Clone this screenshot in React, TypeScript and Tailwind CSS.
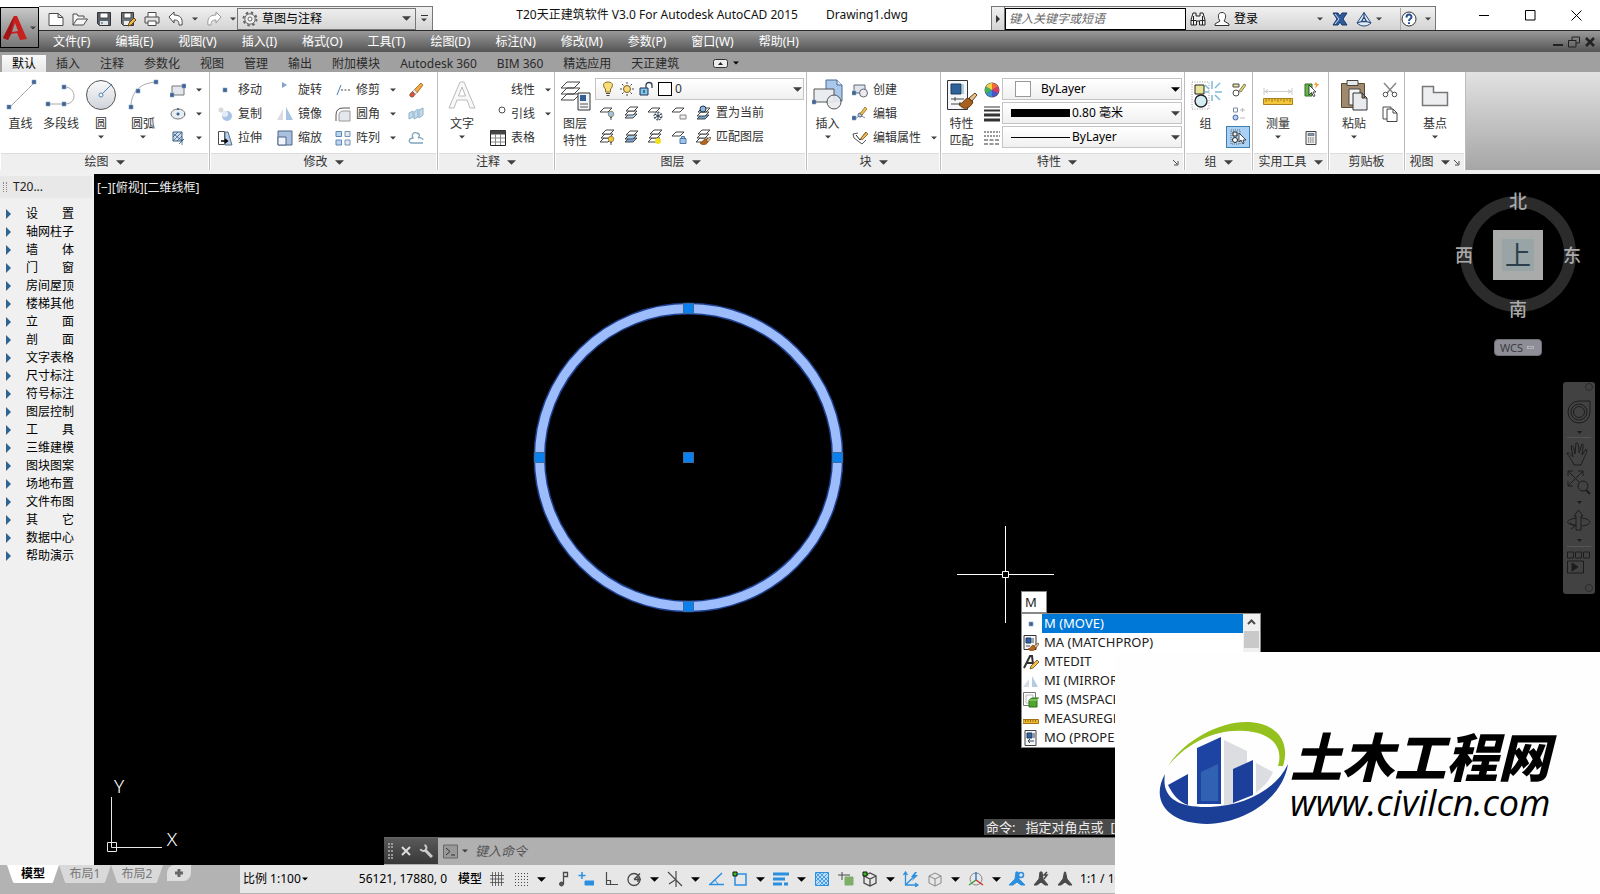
import { useState, type ReactNode } from 'react'
import clsx from 'clsx'

type IconProps = { children: ReactNode; size?: number }

function Icon({ children, size = 16 }: IconProps) {
  return (
    <svg width={size} height={size} viewBox={`0 0 ${size} ${size}`} fill="none" stroke="#4a4a4a" aria-hidden="true" className="shrink-0">
      {children}
    </svg>
  )
}

function Caret({ big = false, dark = false }: { big?: boolean; dark?: boolean }) {
  return (
    <svg width={big ? 9 : 6} height={big ? 5 : 4} viewBox="0 0 8 4" className="shrink-0" aria-hidden="true">
      <path d="M0 0h8L4 4z" fill={dark ? '#000' : '#404040'} />
    </svg>
  )
}

// Shared shapes

const dot = (x: number, y: number) => <rect x={x} y={y} width="4" height="4" fill="#3f628f" stroke="#87a5c9" strokeWidth=".6" />

const layerSheet = (x: number, y: number, fill = '#fff') => (
  <path d={`M${x + 4} ${y}h8l-4 4h-8z`} fill={fill} stroke="#444" />
)

const bulb = (x: number, y: number, fill: string) => (
  <g transform={`translate(${x} ${y})`}>
    <circle cx="3" cy="3" r="2.8" fill={fill} stroke="#7d6a2c" strokeWidth=".7" />
    <path d="M2 6.500h2M2 8h2" stroke="#555" />
  </g>
)

const brush = (x: number, y: number) => (
  <g transform={`translate(${x} ${y})`}>
    <path d="M0 6c2 0 3-3 5-4l3 3c-2 3-5 4-8 1z" fill="#b8651b" stroke="#6b3a10" strokeWidth=".7" />
    <path d="M6 3l4-3 1 1-3 4z" fill="#e8c48a" stroke="#5c4326" strokeWidth=".7" />
  </g>
)

// Quick access toolbar

const QUICK_ICONS: [string, ReactNode][] = [
  ['新建', <path d="M1 2.500h9l5 4v8H1zM10 2.500v4h5" fill="#fff" />],
  ['打开', <path d="M1 14V3h4l1 2h6v2M1 14l4-6h10.500l-4 6z" fill="#f5f5f5" />],
  ['保存', <><path d="M1.500 1.500h13v13h-11l-2-2z" fill="#56616b" stroke="#333" /><path d="M4 2h8v5H4z" fill="#fff" /><path d="M4 10h8v4H4z" fill="#dfe6ea" stroke="none" /><path d="M6 11v2" /></>],
  ['另存为', <><path d="M1.500 1.500h12v13h-10l-2-2z" fill="#6a747c" stroke="#333" /><path d="M4 2h7v5H4z" fill="#fff" /><path d="M4 10h5v4H4z" fill="#eee" stroke="none" /><path d="M8 15l1-3 5-5 2 2-5 5z" fill="#f2b84b" stroke="#6b4a12" /></>],
  ['打印', <><path d="M4 6V1.500h8V6" fill="#fff" /><path d="M1 6h14v6H1z" fill="#e3e3e3" /><path d="M4 10h8v4.500H4z" fill="#fff" /></>],
]

function TitleBar() {
  return (
    <div className="flex h-[31px] items-end border-b border-[#2b2b2b] bg-white">
      <div className="ml-[39px] flex h-6 w-[394px] shrink-0 items-center border-t border-r border-[#777] bg-linear-to-b from-[#f1f1f1] to-[#d3d3d3] pl-[9px]">
        <div className="flex flex-1 items-center gap-2">
          {QUICK_ICONS.map(([name, icon]) => (
            <button key={name} type="button" aria-label={name}><Icon>{icon}</Icon></button>
          ))}
          <button type="button" aria-label="放弃" className="flex items-center gap-2">
            <Icon><path d="M1 6l5-5v3c6 0 9 3 8 10h-3c0-4-1-5-5-5v3z" fill="#fff" /></Icon><Caret />
          </button>
          <button type="button" aria-label="重做" className="flex items-center gap-2">
            <Icon><path d="M15 6l-5-5v3c-6 0-9 3-8 10h3c0-4 1-5 5-5v3z" fill="#fff" stroke="#999" /></Icon><Caret />
          </button>
        </div>
        <label className="flex h-[22px] w-[179px] items-center gap-1 border border-[#777] px-1">
          <Icon>
            <circle cx="8" cy="8" r="6.500" stroke="#666" strokeDasharray="2.500 2.600" strokeWidth="2" />
            <circle cx="8" cy="8" r="5.200" fill="#eee" stroke="#666" />
            <circle cx="8" cy="8" r="2" fill="#fff" stroke="#666" />
          </Icon>
          <select aria-label="工作空间" className="min-w-0 flex-1 appearance-none text-black outline-none">
            <option>草图与注释</option>
          </select>
          <Caret big />
        </label>
        <button type="button" aria-label="自定义" className="flex h-full w-4 flex-col items-center justify-center gap-0.5">
          <span className="h-px w-[7px] bg-[#333]" />
          <Caret />
        </button>
      </div>
      <div className="flex flex-1 justify-center gap-7 self-center whitespace-pre text-[#111]">
        <span>T20天正建筑软件 V3.0 For Autodesk AutoCAD 2015</span>
        <span>Drawing1.dwg</span>
      </div>
      <div className="flex h-6 w-[445px] shrink-0 items-center border-t border-r border-[#777] bg-linear-to-b from-[#f1f1f1] to-[#d3d3d3]">
        <button type="button" aria-label="收拢" className="flex h-full w-[14px] items-center justify-center border-x border-[#777]">
          <svg width="4" height="8" viewBox="0 0 4 8"><path d="M0 0l4 4-4 4z" fill="#333" /></svg>
        </button>
        <input aria-label="搜索" placeholder="键入关键字或短语" className="h-[22px] w-[181px] border border-black bg-white px-[3px] italic outline-none placeholder:text-[#666]" />
        <div className="flex flex-1 items-center pl-1">
          <Icon>
            <path d="M3 2h3v3h4V2h3l2 7v5H9.500v-4h-3v4H1V9zM1 9.500h5.500M9.500 9.500H15M3.500 5v9M12.500 5v9" fill="#eee" stroke="#222" />
          </Icon>
          <button type="button" className="ml-2 flex items-center gap-1 text-black">
            <Icon><path d="M8 1.500c-5 0-4 6-2 8.500L1 13v1.500h14V13l-5-3c2-2.500 3-8.500-2-8.500z" fill="#fff" stroke="#333" /></Icon>
            登录
          </button>
          <span className="ml-auto" />
          <Caret />
          <button type="button" aria-label="Exchange" className="ml-[9px]">
            <Icon><path d="M1 2h5l2 3 2-3h5l-4 6 4 6h-5l-2-3-2 3H1l4-6z" fill="#2c5c9c" stroke="#1b3764" /><path d="M3 3l4 5-4 5" stroke="#c9dcf2" /></Icon>
          </button>
          <button type="button" aria-label="Autodesk 360" className="mx-2 flex items-center gap-1">
            <Icon><path d="M8 1.500L15 12c-4 4-10 4-14 0z" fill="#dfeaf5" stroke="#24487c" /><path d="M8 6l2.500 4.500h-5zM8 1.500V6M15 12l-4.500-1.500M1 12l4.500-1.500" stroke="#24487c" strokeWidth="1.300" fill="#fff" /></Icon>
            <Caret />
          </button>
          <button type="button" aria-label="帮助" className="ml-[10px] flex h-[22px] items-center gap-2 border-l border-[#aaa] pr-1">
            <Icon><circle cx="8" cy="8" r="7" fill="#fff" stroke="#333" /><path d="M5.500 6.500c0-4 5-3.500 5-.6C10.500 8 8 7.500 8 10M8 11.300v1.700" stroke="#23508e" strokeWidth="2" /></Icon>
            <Caret />
          </button>
        </div>
      </div>
      <div className="flex w-[164px] shrink-0 items-center justify-end gap-[35px] self-center pr-[18px]">
        <button type="button" aria-label="最小化"><Icon size={11}><path d="M0 5.500h10" stroke="#000" /></Icon></button>
        <button type="button" aria-label="最大化"><Icon size={11}><path d="M.5.5h9.500v9.500H.5z" stroke="#000" /></Icon></button>
        <button type="button" aria-label="关闭"><Icon size={11}><path d="M.5.5l10 10M10.500.5l-10 10" stroke="#000" /></Icon></button>
      </div>
    </div>
  )
}

const MENUS = ['文件(F)', '编辑(E)', '视图(V)', '插入(I)', '格式(O)', '工具(T)', '绘图(D)', '标注(N)', '修改(M)', '参数(P)', '窗口(W)', '帮助(H)']
const TABS = ['默认', '插入', '注释', '参数化', '视图', '管理', '输出', '附加模块', 'Autodesk 360', 'BIM 360', '精选应用', '天正建筑']

function MenuBar() {
  return (
    <nav className="flex h-[21px] items-center bg-linear-to-b from-[#9a9a9a] to-[#555] pl-[53px] text-white">
      <div className="flex flex-1 gap-[25px]">
        {MENUS.map((m) => <button key={m} type="button">{m}</button>)}
      </div>
      <div className="flex items-center gap-1 pr-1">
        <button type="button" aria-label="最小化图形"><Icon size={12}><path d="M1 9h10" stroke="#222" strokeWidth="2" /></Icon></button>
        <button type="button" aria-label="还原图形"><Icon size={12}><path d="M4 4V1h7.500v6H8M.5 4.500H8V11H.5z" stroke="#222" /></Icon></button>
        <button type="button" aria-label="关闭图形"><Icon size={12}><path d="M2 2l8 8M10 2l-8 8" stroke="#222" strokeWidth="2.500" /></Icon></button>
      </div>
    </nav>
  )
}

function TabBar() {
  const [active, setActive] = useState('默认')
  return (
    <div className="flex h-5 items-end bg-[#a0a0a0] pl-[2px] text-[#2a2a2a]">
      {TABS.map((t) => (
        <button
          key={t}
          type="button"
          onClick={() => setActive(t)}
          className={clsx('h-[17px] px-[10px] leading-[17px]', active === t && 'bg-linear-to-b from-[#fafafa] to-[#e6e6e6] text-black')}>
          {t}
        </button>
      ))}
      <button type="button" aria-label="最小化功能区" className="ml-6 flex h-[18px] items-center gap-1">
        <svg width="16" height="9" viewBox="0 0 16 9"><rect x=".5" y=".5" width="14" height="8" rx="2" fill="#eee" stroke="#333" /><path d="M5 6l2.500-3L10 6z" fill="#222" /></svg>
        <Caret dark />
      </button>
    </div>
  )
}

// Ribbon pieces

function Panel({ title, className, caret = true, launcher = false, children }: { title: string; className: string; caret?: boolean; launcher?: boolean; children: ReactNode }) {
  return (
    <section className={clsx('flex shrink-0 flex-col border-r border-[#bcbcbc] bg-white', className)}>
      <div className="flex h-[81px] pt-[6px]">{children}</div>
      <div className="mx-px flex h-[17px] items-center border-t border-[#dcdcdc] bg-[#efefef]">
        <button type="button" className="flex flex-1 items-center justify-center gap-[7px] whitespace-nowrap">
          {title}
          {caret && <Caret big />}
        </button>
        {launcher && (
          <button type="button" aria-label="设置" className="mr-1"><Icon size={7}><path d="M1 1l4 4M6 2v4H2" /></Icon></button>
        )}
      </div>
    </section>
  )
}

function BigTool({ label, sub, icon, caret = false, className = 'w-10' }: { label: string; sub?: string; icon: ReactNode; caret?: boolean; className?: string }) {
  return (
    <button type="button" className={clsx('flex shrink-0 flex-col items-center whitespace-nowrap', className)}>
      <span className="mt-px mb-1"><Icon size={32}>{icon}</Icon></span>
      <span className="leading-[17px]">{label}</span>
      {sub && <span className="leading-[17px]">{sub}</span>}
      {caret && <span className="mt-[3px]"><Caret /></span>}
    </button>
  )
}

function Tool({ label, icon, caret = false }: { label?: string; icon?: ReactNode; caret?: boolean }) {
  return (
    <button type="button" className="flex h-6 items-center gap-[5px] whitespace-nowrap">
      <Icon>{icon}</Icon>
      {label}
      {caret && <span className="ml-[5px]"><Caret /></span>}
    </button>
  )
}

const Col = ({ children, className }: { children: ReactNode; className?: string }) => (
  <div className={clsx('flex shrink-0 flex-col', className)}>{children}</div>
)

function DrawPanel() {
  return (
    <Panel title="绘图" className="w-[210px]">
      <BigTool label="直线" className="w-[41px]" icon={<><path d="M5 28L29 4" stroke="#aaa" />{dot(2, 26)}{dot(27, 1)}</>} />
      <BigTool label="多段线" icon={<><path d="M4 25h16c13 0 11-17 0-17" stroke="#aaa" />{dot(1, 23)}{dot(17, 23)}{dot(17, 6)}</>} />
      <BigTool label="圆" caret icon={<><defs><linearGradient id="disc" x2="0" y2="1"><stop stopColor="#fafafa" /><stop offset="1" stopColor="#cfd3da" /></linearGradient></defs><circle cx="16" cy="16" r="14.500" fill="url(#disc)" stroke="#555" /><path d="M16 16L27 5" stroke="#4c7fba" /><circle cx="16" cy="16" r="2" fill="#fff" stroke="#4c7fba" /></>} />
      <BigTool label="圆弧" caret className="w-11" icon={<><path d="M4 28C4 12 14 4 29 3" stroke="#aaa" />{dot(2, 26)}{dot(9, 10)}{dot(27, 1)}</>} />
      <Col className="pl-[5px]">
        <Tool caret icon={<><path d="M2 4h12v9H2z" fill="#e4e8ee" stroke="#777" />{dot(0, 11)}{dot(12, 2)}</>} />
        <Tool caret icon={<><ellipse cx="8" cy="8" rx="7" ry="5" fill="#e8edf2" stroke="#777" /><path d="M8 6.500v3M6.500 8h3M8 2v2M14 8h1" stroke="#2f5d8f" strokeWidth="1.500" /></>} />
        <Tool caret icon={<><path d="M3 2h9v9H3z" fill="#cfe0f1" stroke="#36597f" /><path d="M3 7l5-5M3 11l9-9M7 11l5-5M4 4l8 7M9 14l5-5M12 9v6" stroke="#36597f" strokeWidth=".8" /></>} />
      </Col>
    </Panel>
  )
}

function ModifyPanel() {
  return (
    <Panel title="修改" className="w-[228px]">
      <Col className="w-[60px] pl-[7px]">
        <Tool label="移动" icon={dot(6, 6)} />
        <Tool label="复制" icon={<><circle cx="4" cy="4" r="2.500" fill="#d9d9d9" stroke="none" /><circle cx="10" cy="10" r="5" fill="#a9c4e2" stroke="none" /><circle cx="8" cy="8" r="3" fill="#e2ecf7" stroke="none" /></>} />
        <Tool label="拉伸" icon={<><path d="M1.500 1.500h6v13h-6z" fill="#fff" /><path d="M8 2l3 0 4 13H8z" fill="#b8cfe8" stroke="#58718c" /><path d="M4 11h6M8 9l2.500 2L8 13" stroke="#000" strokeWidth="1.300" /></>} />
      </Col>
      <Col className="w-[58px] pl-[7px]">
        <Tool label="旋转" icon={<path d="M5 0l5 3-5 3z" fill="#7fa3cc" stroke="none" />} />
        <Tool label="镜像" icon={<><path d="M6 3v11H0z" fill="#d9dde2" stroke="none" /><path d="M9 1l7 13H9z" fill="#a6c4e0" stroke="none" /></>} />
        <Tool label="缩放" icon={<><path d="M1 1h14v14H1z" fill="#a9c0df" stroke="#4e6788" /><path d="M1 7h8v8H1z" fill="#f2f5f9" stroke="#4e6788" /></>} />
      </Col>
      <Col className="w-[75px] pl-[7px]">
        <Tool label="修剪" caret icon={<><path d="M2 13L6 3" stroke="#4c7fba" /><path d="M6 8h10" strokeDasharray="2 1.500" /></>} />
        <Tool label="圆角" caret icon={<><path d="M1 15V9q0-7 7-7h7" stroke="#555" /><path d="M4 15V9q0-4 5-4h6v10z" fill="#e4e8ee" stroke="#999" /></>} />
        <Tool label="阵列" caret icon={<><path d="M1 1.500h5.500v5H1z M1 10h5.500v5H1z" fill="#bcd5ef" stroke="#5d87b5" /><path d="M10 1.500h5v5h-5zM10 10h5v5h-5z" fill="#dde8f4" stroke="#7893b3" /></>} />
      </Col>
      <Col className="pl-[5px]">
        <Tool icon={<><path d="M6 8l7-7 2 2-6 8z" fill="#f3a73c" stroke="#8a5a1a" strokeWidth=".7" /><path d="M4.500 9.500L6.500 7.500l2.500 3L7 12.500z" fill="#eee" stroke="#777" strokeWidth=".6" /><path d="M2 12l2.500-2.500L7 12.500 5 15c-2 .5-4-1-3-3z" fill="#d6593a" stroke="#7a3a22" strokeWidth=".7" /></>} />
        <Tool icon={<><path d="M1 7l4-2v6l-4 2zM6 6l4-3v8l-4 2zM11 4l4-2v7l-4 3z" fill="#c5dbea" stroke="#8cb1cd" /></>} />
        <Tool icon={<path d="M15 13H3C0 12 1 8 5 8 3 4 6 2 9 3c4 1 2 4 1 5 3-1 5 1 5 2" stroke="#7da5bd" strokeWidth="1.300" />} />
      </Col>
    </Panel>
  )
}

function AnnotatePanel() {
  return (
    <Panel title="注释" className="w-[117px]">
      <BigTool label="文字" caret className="w-[48px]" icon={<path d="M3 29L14 3h4l11 26h-5l-3-8H11l-3 8zM12.500 17h7L16 8z" fill="#f8f8f8" stroke="#bbb" />} />
      <Col className="pl-1">
        <Tool label="线性" caret />
        <Tool label="引线" caret icon={<circle cx="12" cy="4" r="3" />} />
        <Tool label="表格" icon={<><path d="M.5.5h15v15H.5z" fill="#fff" stroke="#222" /><path d="M1 1h14v3H1z" fill="#444" /><path d="M1 8h14M1 12h14M5.500 4v11M10.500 4v11" stroke="#888" /></>} />
      </Col>
    </Panel>
  )
}

const LAYER_ROWS: ReactNode[][] = [
  [
    <>{layerSheet(1, 3)}{bulb(9, 6, '#9cc5ee')}</>,
    <>{layerSheet(2, 9, '#bdd5ec')}{layerSheet(2, 6)}{layerSheet(3, 2)}</>,
    <>{layerSheet(1, 3)}<circle cx="11" cy="11" r="4" fill="#fff" stroke="#26394d" strokeDasharray="2 1" /><path d="M11 7v8M7.500 9l7 4M14.500 9l-7 4" stroke="#26394d" /></>,
    <>{layerSheet(1, 3)}<path d="M9 10h6v4H9z" fill="#eee" stroke="#888" /></>,
  ],
  [
    <>{layerSheet(1, 9)}{layerSheet(2, 5)}{layerSheet(3, 1)}{bulb(9, 7, '#f5c83c')}</>,
    <>{layerSheet(2, 9, '#7aa5d8')}{layerSheet(2, 6, '#a6c8ea')}{layerSheet(3, 2)}</>,
    <>{layerSheet(1, 9)}{layerSheet(2, 5)}{layerSheet(3, 1)}<circle cx="11" cy="12" r="3" fill="#f4e01c" stroke="none" /></>,
    <>{layerSheet(1, 3)}<path d="M9 9.500h6v5H9zM10.500 9V7.500h3V9" fill="#9cc5ee" stroke="#52789f" /></>,
  ],
]

function Combo({ label, value, before, className, caretDark = true }: { label: string; value: string; before: ReactNode; className?: string; caretDark?: boolean }) {
  return (
    <label className={clsx('flex h-[22px] items-center border border-[#c4c4c4] bg-linear-to-b from-white to-[#f0f0f0] pr-px', className)}>
      {before}
      <select aria-label={label} className="min-w-0 flex-1 appearance-none outline-none">
        <option>{value}</option>
      </select>
      <Caret big dark={caretDark} />
    </label>
  )
}

function LayerPanel() {
  return (
    <Panel title="图层" className="w-[252px]">
      <BigTool label="图层" sub="特性" icon={<><path d="M8 3h13l-6 6H2zM8 9h13l-6 6H2zM8 15h13l-6 6H2z" fill="#fff" stroke="#444" /><path d="M19 14h12v17H19z" fill="#f2f5f8" stroke="#333" /><path d="M21 16h6v6h-6z" fill="#315f94" stroke="none" /><path d="M21 25h8M21 28h8" stroke="#555" /></>} />
      <Col className="flex-1 gap-px pr-[2px]">
        <Combo
          label="图层"
          value="0"
          caretDark={false}
          before={
            <span className="flex items-center gap-[3px] pr-[3px] pl-1">
              <Icon><path d="M8 1c-6 0-5 5-2.500 7v3h5V8C13 6 14 1 8 1z" fill="#f9dd7a" stroke="#8a6d1c" /><path d="M6 12.500h4M6.500 14.500h3" /></Icon>
              <Icon><circle cx="8" cy="8" r="3.500" fill="#f9d97a" stroke="#7a5c1c" /><path d="M8 1v2M8 13v2M1 8h2M13 8h2M3 3l1.500 1.500M11.500 11.500L13 13M13 3l-1.500 1.500M3 13l1.500-1.500" /></Icon>
              <Icon><path d="M2 7h8v7H2z" fill="#7fc4ec" stroke="#235" /><path d="M8 7V4q0-2.500 3-2.500T14 4v3" stroke="#345" strokeWidth="1.300" /><path d="M6 9v3" stroke="#123" /></Icon>
              <span className="ml-px h-[14px] w-[14px] border border-black bg-white" />
            </span>
          }
        />
        <div>
          {LAYER_ROWS.map((row, i) => (
            <div key={i} className="flex items-center gap-2 pl-1">
              {row.map((icon, j) => <Tool key={j} icon={icon} />)}
              <Tool
                label={i === 0 ? '置为当前' : '匹配图层'}
                icon={i === 0
                  ? <>{layerSheet(2, 10, '#6f9fd4')}{layerSheet(2, 7)}{layerSheet(3, 3)}<circle cx="8" cy="4" r="3" fill="#8db9e4" stroke="#234" /></>
                  : <>{layerSheet(1, 9)}{layerSheet(2, 5)}{layerSheet(3, 1)}{brush(5, 8)}</>}
              />
            </div>
          ))}
        </div>
      </Col>
    </Panel>
  )
}

function BlockPanel() {
  return (
    <Panel title="块" className="w-[134px]">
      <BigTool label="插入" caret className="w-[41px]" icon={<><path d="M14 1h11l5 5v16H14z" fill="#a9c8ea" stroke="#4a6a92" /><path d="M25 1v5h5" fill="#e3eefa" stroke="#4a6a92" /><path d="M2 10h20v13H2z" fill="#e9edf2" stroke="#555" /><circle cx="22" cy="23" r="7" fill="#e9ebee" fillOpacity=".9" stroke="#555" />{dot(0, 21)}</>} />
      <Col className="pl-1">
        <Tool label="创建" icon={<><path d="M2 3h11v8H2z" fill="#dfe5ed" stroke="#667" /><circle cx="11.500" cy="11" r="4" fill="#e9ebee" stroke="#667" />{dot(0, 9)}</>} />
        <Tool label="编辑" icon={<><path d="M3 13l5-4 5 3" stroke="#88a" /><circle cx="8" cy="9" r="2" fill="#b8d2ee" stroke="#568" /><path d="M8 8l5-7 2 2-5 6z" fill="#f2c04b" stroke="#7a5a1c" strokeWidth=".7" />{dot(0, 10)}</>} />
        <Tool label="编辑属性" caret icon={<><path d="M1 4l1 4 8 6 4-4M1 4l5-1" stroke="#555" fill="#fff" /><path d="M4 5l4 5 6-8" stroke="#222" /><path d="M9 8l5-6 2 2-6 6z" fill="#f2b84b" stroke="#6b4a12" strokeWidth=".7" /></>} />
      </Col>
    </Panel>
  )
}

const propsSheet = (
  <><path d="M1.500 1.500h20v29h-20z" fill="#f4f6f9" stroke="#333" /><path d="M5 5h10v10H5z" fill="#2e6299" stroke="#1d3c60" /><path d="M17 5v10" stroke="#7aa" /><path d="M5 20h13M5 25h9M9 18v4M14 23v4" stroke="#444" /></>
)

function PropertiesPanel() {
  return (
    <Panel title="特性" className="w-[244px]" launcher>
      <BigTool label="特性" sub="匹配" className="w-[41px]" icon={<>{propsSheet}<path d="M13 25c4 0 5-5 9-6l5 4c-3 7-10 9-14 2z" fill="#a8601f" stroke="#5d3410" /><path d="M23 19l6-5 2 2-5 6z" fill="#e8c48a" stroke="#5c4326" /></>} />
      <Col className="w-5 items-center">
        <Tool icon={<g stroke="none"><circle cx="8" cy="8" r="7.500" fill="#555" /><path d="M8 8V1a7 7 0 0 1 6 3.500z" fill="#f06a3a" /><path d="M8 8l6-3.500a7 7 0 0 1 0 7z" fill="#d83a6a" /><path d="M8 8l6 3.500A7 7 0 0 1 8 15z" fill="#4a55c8" /><path d="M8 8v7a7 7 0 0 1-6-3.500z" fill="#3a8fd0" /><path d="M8 8l-6 3.500a7 7 0 0 1 0-7z" fill="#46b25a" /><path d="M8 8L2 4.500A7 7 0 0 1 8 1z" fill="#f2d24a" /></g>} />
        <Tool icon={<><path d="M0 1h16" stroke="#333" /><path d="M0 4.500h16" stroke="#333" strokeWidth="2" /><path d="M0 9h16M0 14h16" stroke="#333" strokeWidth="3" /></>} />
        <Tool icon={<><path d="M0 2h16M0 6h16" stroke="#333" strokeDasharray="2 1" /><path d="M0 10h16M0 14h16" stroke="#333" strokeDasharray="4 1.500" /></>} />
      </Col>
      <Col className="flex-1 gap-[2px] pr-[2px] text-black">
        <Combo label="对象颜色" value="ByLayer" before={<span className="mr-[10px] ml-3 h-4 w-4 border border-[#999] bg-white" />} />
        <Combo label="线宽" value="0.80 毫米" caretDark={false} before={<span className="mr-[2px] ml-2 h-2 w-[59px] bg-black" />} />
        <Combo label="线型" value="ByLayer" caretDark={false} before={<span className="mr-[2px] ml-2 h-px w-[59px] bg-black" />} />
      </Col>
    </Panel>
  )
}

function GroupPanel() {
  return (
    <Panel title="组" className="w-[68px]">
      <BigTool label="组" className="w-[41px]" icon={<><path d="M2 3h17v27H2z" stroke="#999" strokeDasharray="1 1.500" /><path d="M5 6h9v9H5z" fill="#e8e59a" stroke="#222" /><circle cx="11" cy="22" r="6" fill="#d6ecf5" stroke="#222" strokeWidth="1.300" /><path d="M22 2v8M22 16v6M15 13h4M25 13h7M25 9l5-5M25 16l5 5M15 6l4 4" stroke="#7fbadb" strokeWidth="1.500" /></>} />
      <Col className="w-6 items-center">
        <Tool icon={<><path d="M3 2h6v3H3z" fill="#e8e59a" /><circle cx="6" cy="11" r="3" /><path d="M9 9l5-7 2 1-5 7z" fill="#e8d45a" stroke="#555" strokeWidth=".7" /></>} />
        <Tool icon={<><path d="M3.500 2h4v4h-4z" stroke="#7a8aa0" /><circle cx="5.500" cy="11.500" r="2.500" fill="#b8d2ee" stroke="#3f5f9f" /><path d="M10 4h5M12.500 2v4M10 12h5" stroke="#bbb" /></>} />
        <button type="button" aria-label="组选择" className="flex h-[22px] w-6 items-center justify-center border border-[#3c7fb1] bg-[#a9d1f5]">
          <Icon><path d="M1 1h9v14H1z" stroke="#666" strokeDasharray="1 1" /><path d="M3 3h4v4H3z" fill="#eee" stroke="#222" /><circle cx="5" cy="11" r="2.500" stroke="#222" fill="#fff" /><path d="M9 4v9l2-2 2 4 1-1-1-3h3z" fill="#fff" stroke="#222" strokeWidth=".8" /></Icon>
        </button>
      </Col>
    </Panel>
  )
}

function UtilitiesPanel() {
  return (
    <Panel title="实用工具" className="w-[76px]">
      <BigTool label="测量" caret className="w-[50px]" icon={<><path d="M2 9v7M30 9v7M2 12.500h28M6 10.500l-3 2 3 2M26 10.500l3 2-3 2" stroke="#ccc" /><path d="M1.500 19.500h29v6h-29z" fill="#f4c63a" stroke="#a8801c" /><path d="M4 20v3M7 20v2M10 20v3M13 20v2M16 20v3M19 20v2M22 20v3M25 20v2M28 20v3" stroke="#8a6512" strokeWidth=".8" /></>} />
      <Col>
        <Tool icon={<><path d="M2 2h7v12H2z" fill="#64b54a" stroke="#356b24" /><path d="M6 3v10l2.500-2.500 2 4 1.500-.700-2-3.800h3z" fill="#fff" stroke="#222" strokeWidth=".8" /><path d="M13 0l-2 3h2l-1 4 4-5h-2z" fill="#f29a2e" stroke="none" /></>} />
        <span className="h-6" />
        <Tool icon={<><path d="M3 1.500h10v13H3z" fill="#f0f0f0" stroke="#444" /><path d="M5 3.500h6v2H5z" fill="#89a" stroke="#456" strokeWidth=".6" /><path d="M5 8h6M5 10h6M5 12h6" strokeDasharray="1.200 1" /></>} />
      </Col>
    </Panel>
  )
}

function RibbonTail() {
  return (
    <>
      <Panel title="剪贴板" caret={false} className="w-[76px]">
        <BigTool label="粘贴" caret className="w-[50px]" icon={<><path d="M3.500 4.500h23v24h-23z" fill="#a0896c" stroke="#5c4b34" /><path d="M9 1.500h11v5H9z" fill="#e8e8e8" stroke="#444" /><path d="M11 10h11v16H11z" fill="#f4f4f4" stroke="#444" /><path d="M15 14h9l5 5v12H15zM24 14v5h5" fill="#e9ebee" stroke="#333" /></>} />
        <Col className="pl-[3px]">
          <Tool icon={<><path d="M2 1l9 10M14 1L5 11" stroke="#888" strokeWidth="1.500" /><circle cx="3.500" cy="12.500" r="2.300" /><circle cx="12.500" cy="12.500" r="2.300" /></>} />
          <Tool icon={<><path d="M1 1h8v12H1z" fill="#fff" /><path d="M5 3h6l4 4v8.500H5zM11 3v4h4" fill="#fff" stroke="#444" /></>} />
        </Col>
      </Panel>
      <Panel title="视图" className="w-[61px]" launcher>
        <BigTool label="基点" caret className="w-[60px]" icon={<path d="M3.500 7.500h11v6h14v13h-25z" fill="#eceef0" stroke="#777" strokeWidth="1.500" />} />
      </Panel>
    </>
  )
}

function Ribbon() {
  return (
    <div className="flex h-[98px] bg-linear-to-b from-[#e2e2e2] to-[#a6a6a6] text-[#333]">
      <DrawPanel />
      <ModifyPanel />
      <AnnotatePanel />
      <LayerPanel />
      <BlockPanel />
      <PropertiesPanel />
      <GroupPanel />
      <UtilitiesPanel />
      <RibbonTail />
    </div>
  )
}

const SCREEN_MENU = [
  '设　　置', '轴网柱子', '墙　　体', '门　　窗', '房间屋顶', '楼梯其他', '立　　面', '剖　　面', '文字表格', '尺寸标注',
  '符号标注', '图层控制', '工　　具', '三维建模', '图块图案', '场地布置', '文件布图', '其　　它', '数据中心', '帮助演示',
]

function Sidebar() {
  return (
    <aside className="w-[94px] shrink-0 bg-[#f0f0f0] text-black">
      <div className="mt-[2px] mr-[2px] flex h-[22px] items-center gap-[6px] bg-[#e8e8e8] pl-[3px] text-[#222]">
        <span className="h-[10px] w-1 border-x border-dotted border-[#888]" />
        T20...
      </div>
      <ul className="mt-[7px]">
        {SCREEN_MENU.map((item) => (
          <li key={item}>
            <button type="button" className="flex h-[18px] items-center gap-[15px] pl-[6px] whitespace-pre">
              <svg width="5" height="10" viewBox="0 0 5 10"><path d="M0 0l5 5-5 5z" fill="#2f6390" /></svg>
              {item}
            </button>
          </li>
        ))}
      </ul>
    </aside>
  )
}

const SUGGESTIONS: { name: string; icon: ReactNode }[] = [
  { name: 'M (MOVE)', icon: dot(6, 6) },
  { name: 'MA (MATCHPROP)', icon: <><path d="M1 .5h12v14H1z" fill="#f4f6f9" stroke="#333" /><path d="M3 3h5v5H3z" fill="#2e5fa8" stroke="#1d3c60" /><path d="M10 3v5M3 11h4" />{brush(5, 8)}</> },
  { name: 'MTEDIT', icon: <><path d="M1 14L7 2h2l1 8M4 9h6" stroke="#333" strokeWidth="2" /><path d="M7 15l1-3 6-6 2 2-6 6z" fill="#f2c04b" stroke="#6b4a12" strokeWidth=".8" /></> },
  { name: 'MI (MIRROR)', icon: <><path d="M6 6v8H0z" fill="#d5dce5" stroke="none" /><path d="M9 3l6 11H9z" fill="#b5cbe0" stroke="none" /></> },
  { name: 'MS (MSPACE)', icon: <><path d="M.5.5h12v13H.5z" fill="#fff" stroke="#777" /><path d="M3 3h7v8H3z" stroke="#bbb" /><path d="M6 8l3-2h7l-2 2v7H6z" fill="#4ea62e" stroke="#2f6e1a" /><path d="M6 8h8l2-2" stroke="#a5dc8a" /></> },
  { name: 'MEASUREGEOM', icon: <><path d="M0 8.500h15.500v4H0z" fill="#f0bb2f" stroke="#a07416" /><path d="M2.500 9v2M5 9v2M7.500 9v2M10 9v2M12.500 9v2" stroke="#7d580c" strokeWidth=".8" /></> },
  { name: 'MO (PROPERTIES)', icon: <><path d="M2 .5h11v15H2z" fill="#f4f6f9" stroke="#444" /><path d="M4 3h5v5H4z" fill="#35639b" stroke="#1d3c60" /><path d="M11 3v5M5 11h6M7 13l-2-2 2-2" stroke="#345" /></> },
]

function CommandPopup() {
  return (
    <div className="absolute top-[417px] left-[927px] flex w-[240px] flex-col items-start text-[#222]">
      <input aria-label="命令" defaultValue="M" className="h-[22px] w-[26px] border border-[#888] bg-white px-[3px] text-[13px] outline-none" />
      <div className="flex w-full border border-[#888] bg-white">
        <ul className="flex-1">
          {SUGGESTIONS.map((s, i) => (
            <li key={s.name} className="flex h-[19px] items-center gap-[3px] pl-px text-[13px]">
              <Icon>{s.icon}</Icon>
              <span className={clsx('h-full flex-1 pl-[2px] leading-[19px]', i === 0 && 'bg-[#0078d7] text-white')}>{s.name}</span>
            </li>
          ))}
        </ul>
        <div className="flex w-[17px] flex-col items-center bg-[#f0f0f0]">
          <span className="flex h-[17px] items-center"><Icon size={9}><path d="M1 6l3.500-3.500L8 6" strokeWidth="2" /></Icon></span>
          <span className="h-[17px] w-[15px] bg-[#c9c9c9]" />
        </div>
      </div>
    </div>
  )
}

function ViewCube() {
  return (
    <div className="absolute top-[15px] right-[18px] flex w-32 flex-col items-center text-[#aaa]">
      <div className="relative grid h-[132px] w-32 grid-cols-[20px_1fr_20px] grid-rows-[24px_1fr_24px] place-items-center text-[18px] leading-6 font-medium">
        <svg className="absolute inset-0" width="128" height="130" viewBox="0 0 128 130" aria-hidden="true">
          <circle cx="64" cy="65" r="52" fill="none" stroke="#2b2b2b" strokeWidth="12" />
        </svg>
        <span className="relative col-start-2">北</span>
        <span className="relative col-start-1 row-start-2">西</span>
        <button type="button" className="relative col-start-2 row-start-2 flex h-[50px] w-[50px] items-center justify-center bg-[#a9aaaa]">
          <span className="flex h-8 w-8 items-center justify-center bg-[#98a4a5] text-[26px] leading-8 font-normal text-[#2c3e4c]">上</span>
        </button>
        <span className="relative col-start-3 row-start-2">东</span>
        <span className="relative col-start-2 row-start-3">南</span>
      </div>
      <button type="button" className="mt-[18px] flex h-[17px] w-12 items-center justify-center gap-1 rounded-[4px] border border-[#6f6f76] bg-[#8e8e96] pr-[2px] text-[11px] text-[#3c3c40]">
        WCS
        <span className="h-[3px] w-[7px] border border-[#b5b5bf]" />
      </button>
    </div>
  )
}

function NavBar() {
  return (
    <div className="absolute top-[208px] right-[5px] w-8 rounded-[3px] bg-[#424242]">
      <svg width="32" height="212" viewBox="0 0 32 212" fill="none" stroke="#1c1c1c" aria-label="导航栏">
        <circle cx="26" cy="5" r="3.500" stroke="#2a2a2a" />
        <path d="M16 19h11v11a11 11 0 1 1-11-11z" />
        <circle cx="16" cy="30" r="8" /><circle cx="16" cy="30" r="5.500" />
        <path d="M14 49h5l-2.500 3z" fill="#1c1c1c" stroke="none" />
        <path d="M4 55.500h24" stroke="#555" />
        <path d="M11 83c-1-4-6-9-7-12 2-1 4 2 6 4L8 64c2-1 3 2 4 8l1-11c2-1 3 2 3 10l3-9c2 0 1 3 0 11l4-6c2 1 0 5-2 9s-2 5-3 7z" />
        <path d="M5 89l14 14M20 89L5 104M5 94v-5h5M15 89h5v5M5 99v5h5" />
        <circle cx="20" cy="104" r="5" fill="#424242" /><path d="M23 108l4 4" strokeWidth="2" />
        <path d="M14 119h5l-2.500 3z" fill="#1c1c1c" stroke="none" />
        <path d="M13 148v-14h-2l4.500-6 4.500 6h-2v14z" /><path d="M13 136c-12 2-10 7 0 7M18 136c12 1 11 7 1 8M7 141l5 3-4 3" />
        <path d="M14 157h5l-2.500 3z" fill="#1c1c1c" stroke="none" />
        <path d="M4 164.500h24" stroke="#555" />
        <path d="M4.500 170h6v6h-6zM12.500 170h6v6h-6zM20.500 170h6v6h-6zM4.500 179h16v12h-16z" /><path d="M9 181v8l6-4z" fill="#1c1c1c" />
        <circle cx="26" cy="206" r="3.500" stroke="#2a2a2a" />
      </svg>
    </div>
  )
}

// Selected circle with its five grips, crosshair cursor and UCS marker
function Drawing() {
  const grips = [[594, 134], [445, 283], [594, 283], [743, 283], [594, 432]]
  return (
    <svg className="absolute top-0 left-0" width="1100" height="691" viewBox="0 0 1100 691" fill="none" aria-hidden="true">
      <circle cx="594.500" cy="283.500" r="149" stroke="#1d3f8c" strokeWidth="12" />
      <circle cx="594.500" cy="283.500" r="149" stroke="#9dbcfb" strokeWidth="9" />
      {grips.map(([x, y]) => (
        <rect key={`${x}-${y}`} x={x - 4.5} y={y - 4.5} width="10" height="10" fill="#0a80ee" stroke="#3b6a9c" />
      ))}
      <path d="M863 400.500h45M915 400.500h45M911.500 352v45M911.500 404v45M908.500 397.500h6v6h-6z" stroke="#fff" />
      <path d="M17.500 623v50.500h50.500M13.500 668.500h9v9h-9z" stroke="#e6e6e6" />
      <text x="25" y="619" fontSize="19" fill="#fff" textAnchor="middle" className="font-light">Y</text>
      <text x="78" y="672" fontSize="19" fill="#fff" textAnchor="middle" className="font-light">X</text>
    </svg>
  )
}

function CommandLine() {
  return (
    <div className="absolute right-0 bottom-0 left-[290px] flex h-7 border-t border-[#666] bg-[#b0b0b0] pb-px">
      <div className="flex w-[54px] items-center gap-2 bg-linear-to-b from-[#5a5a5a] to-[#383838] pl-1">
        <span className="h-4 w-[5px] border-x-2 border-dotted border-[#999]" />
        <Icon size={10}><path d="M1 1l8 8M9 1L1 9" stroke="#ddd" strokeWidth="2" /></Icon>
        <Icon size={14}><path d="M13 13L6 6" stroke="#ccc" strokeWidth="3" /><path d="M1.500 5a3 3 0 0 0 5 1 3 3 0 0 0-1-5" stroke="#ccc" strokeWidth="2" /></Icon>
      </div>
      <label className="flex flex-1 items-center gap-1 pl-[5px]">
        <Icon size={15}><path d="M.5 1h14v13H.5z" fill="#999" stroke="#666" /><path d="M3 4l4 3.500L3 11M8 11h4" stroke="#333" /></Icon>
        <Caret />
        <input placeholder="键入命令" aria-label="命令行" className="ml-[3px] flex-1 text-[13px] italic outline-none placeholder:text-[#555]" />
      </label>
    </div>
  )
}

function Canvas() {
  return (
    <main className="relative min-w-0 flex-1 overflow-hidden bg-black">
      <div className="px-[3px] pt-[6px] text-[#eee]">[−][俯视][二维线框]</div>
      <Drawing />
      <ViewCube />
      <NavBar />
      <CommandPopup />
      <div className="absolute right-0 bottom-[30px] left-[890px] h-4 overflow-hidden bg-[#4a4a4a] pl-[2px] text-[13px] leading-4 whitespace-pre text-[#eee]">命令:   指定对角点或  [</div>
      <CommandLine />
    </main>
  )
}

const BLUE = '#2b8fe0'

// Each entry: name, drawing, whether a drop-down arrow follows
const STATUS_ICONS: [string, ReactNode, boolean][] = [
  ['栅格', <path d="M3.500 1v14M6.500 1v14M9.500 1v14M12.500 1v14M1 4.500h14M1 8h14M1 11.500h14" strokeWidth=".8" />, false],
  ['捕捉', <path d="M2 2.500h13M2 5.500h13M2 8.500h13M2 11.500h13M2 14.500h13" strokeDasharray="1 2" />, true],
  ['推断约束', <><path d="M9.500 13V1.500h4v4h-4" strokeWidth="1.300" /><circle cx="7.500" cy="13" r="2" fill="#555" /></>, false],
  ['动态输入', <><path d="M4 1v7M.5 4.500h7" stroke={BLUE} strokeWidth="1.500" /><path d="M7 10h9v4H7z" fill={BLUE} stroke={BLUE} /></>, false],
  ['正交', <path d="M4.500 1v12.500H16M4.500 9.500h4v4" strokeWidth="1.200" />, false],
  ['极轴', <><circle cx="8" cy="8.500" r="6" strokeWidth="1.300" /><path d="M8 8.500l6-6M8 8.500h7M12 6v5" strokeWidth="1.500" /></>, true],
  ['等轴测', <path d="M9 0v16M1 1l14 14M8 9l-6 4" strokeWidth="1.200" />, true],
  ['对象追踪', <><path d="M1 13.500h15M2 13.500L14 2" stroke={BLUE} strokeWidth="1.500" /><path d="M7 9l3 4" stroke={BLUE} /></>, false],
  ['对象捕捉', <><path d="M3 3h11v11H3z" stroke={BLUE} strokeWidth="1.500" /><path d="M1 1h4v4H1z" fill="#38c020" stroke="#111" /></>, true],
  ['线宽', <path d="M0 3h16M0 8h12M0 13h9M11 13h4" stroke={BLUE} strokeWidth="3" />, true],
  ['透明度', <><path d="M1.500 1.500h13v13h-13z" fill="#b9dcf9" stroke={BLUE} /><path d="M2 6l4-4M2 10l8-8M2 14L14 2M6 14l8-8M10 14l4-4M2 2l12 12M6 2l8 8M2 6l8 8" stroke={BLUE} strokeWidth=".8" /></>, false],
  ['选择循环', <><path d="M4 1v8M0 4h12" /><path d="M7 6h8v8H7z" fill="#7fae68" stroke="#7fae68" /></>, false],
  ['三维捕捉', <><path d="M2 5l6-3 6 3v7l-6 3-6-3zM2 5l6 3 6-3M8 8v7" strokeWidth="1.300" /><path d="M1 1h4v4H1z" fill="#38c020" stroke="#111" /></>, true],
  ['动态UCS', <><path d="M2.500 1v13H15M2.500 14l8-8M.5 4l2-3 2 3M12 12l3 2-3 2" stroke={BLUE} strokeWidth="1.300" /><path d="M12 1l-4 5h3l-2 4 6-6h-3l2-3z" fill={BLUE} stroke="none" /></>, false],
  ['过滤', <path d="M2 5l6-3 6 3v7l-6 3-6-3zM2 5l6 3 6-3M8 8v7" stroke="#888" />, true],
  ['小控件', <><circle cx="8" cy="8" r="6" stroke="#888" /><path d="M8 9V1" stroke="#2f7fd0" strokeWidth="1.500" /><path d="M8 9l-7 5" stroke="#3f9f3f" strokeWidth="1.500" /><path d="M8 9l7 5" stroke="#c33" strokeWidth="1.500" /></>, true],
  ['注释可见性', <><path d="M7 1h2l1 7 6 6h-4l-4-3-4 3H0l6-6z" fill={BLUE} stroke={BLUE} /><circle cx="12" cy="4" r="2.500" fill="#e7e7e7" stroke={BLUE} strokeWidth="1.500" /></>, false],
  ['自动缩放', <><path d="M7 1h2l1 7 5 6h-3l-4-3-4 3H1l5-6z" fill="#4a4a4a" /><path d="M14 1l-3 3h3l-3 4" strokeWidth="1.500" /></>, false],
  ['注释比例', <path d="M7.500 1h1l1.500 7 5 6h-3l-4-3-4 3H1l5-6z" fill="#4a4a4a" />, false],
]

const LAYOUT_TABS = ['模型', '布局1', '布局2']

function StatusBar() {
  return (
    <footer className="flex h-[29px] bg-[#b3b3b3] text-black">
      <div className="flex w-60 shrink-0 items-start pl-[7px]">
        {LAYOUT_TABS.map((t, i) => (
          <button
            key={t}
            type="button"
            className={clsx('h-[18px] w-[52px] rounded-b-[8px] leading-[18px] [clip-path:polygon(0_0,100%_0,88%_100%,12%_100%)]', i === 0 ? 'bg-white font-bold' : 'bg-[#d9d9d9] text-[#777]')}>
            {t}
          </button>
        ))}
        <button type="button" aria-label="新建布局" className="ml-1 flex h-4 w-6 items-center justify-center rounded-tl-[8px] rounded-br-[8px] bg-[#dedede]">
          <Icon size={8}><path d="M4 0v8M0 4h8" strokeWidth="3" stroke="#666" /></Icon>
        </button>
      </div>
      <div className="mb-px flex flex-1 items-center bg-[#e7e7e7] pl-[3px] whitespace-nowrap">
        <button type="button" className="flex w-[65px] items-center justify-between">比例 1:100 <Caret dark /></button>
        <span className="w-[139px] text-right">56121, 17880, 0</span>
        <button type="button" className="mr-[3px] ml-[11px] font-medium">模型</button>
        {STATUS_ICONS.map(([name, icon, caret]) => (
          <button key={name} type="button" aria-label={name} className={clsx('flex h-7 items-center gap-2 pl-1', caret ? 'w-[41px]' : 'w-6')}>
            <Icon>{icon}</Icon>
            {caret && <Caret big dark />}
          </button>
        ))}
        <button type="button" className="ml-[3px]">1:1 / 100%</button>
      </div>
    </footer>
  )
}

function SiteBanner() {
  return (
    <a href="#civilcn" className="absolute right-0 bottom-0 flex h-[242px] w-[485px] items-center bg-[#fefefe] pl-[43px] text-black">
      <svg width="132" height="108" viewBox="0 0 132 108" className="mb-1 shrink-0" aria-hidden="true">
        <path d="M10 49C26 24 60 5 88 5c30 0 45 19 37 44h-5c6-19-7-34-34-35C58 12 30 25 10 49z" fill="#95c11f" />
        <path d="M10 68l20-11v31c-9-3-15-10-20-20z" fill="#1d3f9c" />
        <path d="M39 31l24-11v67H39z" fill="#1d44a2" />
        <path d="M43 55l17-8v37H43z" fill="#3f74bd" opacity=".6" />
        <path d="M66 23l23 11v13L75 53v34l-9 1z" fill="#dcdde0" />
        <path d="M75 52l20-9v35l-20 8z" fill="#1d3f9c" />
        <path d="M98 46l17 9c-4 9-9 14-17 21z" fill="#dcdde0" />
        <path d="M7 57C3 81 20 91 52 90c34-1 66-17 78-43-5 33-41 59-81 60C13 107-9 86 7 57z" fill="#1b3f96" />
      </svg>
      <div className="flex flex-col pt-2">
        <span className="text-[52px] leading-[52px] font-black italic">土木工程网</span>
        <span className="font-[Open_Sans] text-[36px] leading-10 font-medium italic">www.civilcn.com</span>
      </div>
    </a>
  )
}

export default function App() {
  return (
    <div className="relative flex min-h-screen flex-col overflow-hidden bg-[#f0f0f0] font-['Noto_Sans','Noto_Sans_CJK_SC',sans-serif] text-[12px] leading-4">
      <header className="relative">
        <TitleBar />
        <MenuBar />
        <TabBar />
        <Ribbon />
        <button type="button" aria-label="应用程序菜单" className="absolute top-[7px] left-0 flex h-[41px] w-[39px] items-center gap-[3px] border border-black bg-linear-to-b from-[#c8c8c8] to-[#777] pl-[2px]">
          <svg width="24" height="26" viewBox="0 0 24 26">
            <path d="M11 1h3l10 23-7 1-3-7-6 1-3 6-5-2z" fill="#c8201f" />
            <path d="M11 1L8 19l-3 6-5-2z" fill="#a01616" />
            <path d="M12 8l3 8-6 1z" fill="#999" />
          </svg>
          <Caret />
        </button>
      </header>
      <div className="mt-1 flex flex-1">
        <Sidebar />
        <Canvas />
      </div>
      <StatusBar />
      <SiteBanner />
    </div>
  )
}
